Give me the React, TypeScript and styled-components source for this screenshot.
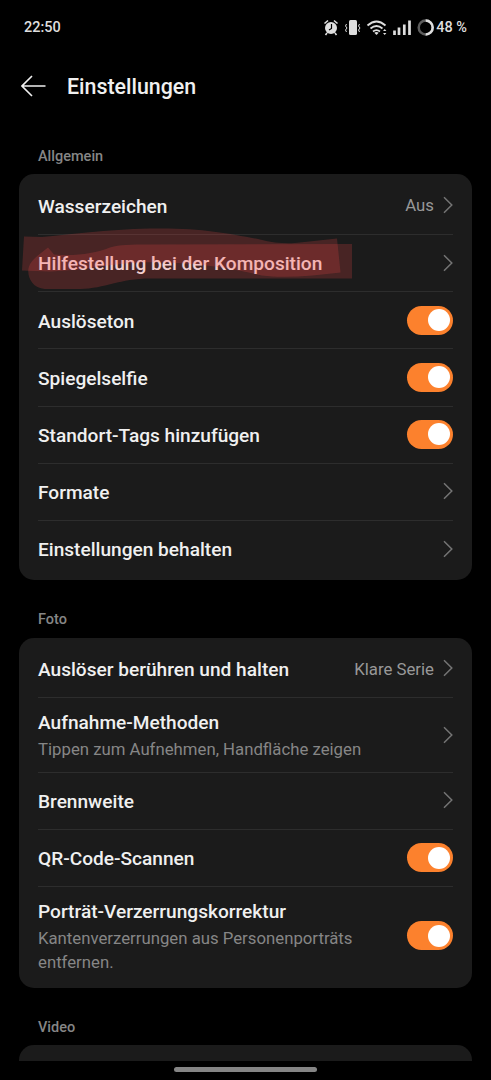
import styled, { createGlobalStyle } from "styled-components";

const GlobalStyle = createGlobalStyle`
	* {
		box-sizing: border-box;
	}

	body {
		margin: 0;
		background: #000;
		font-family: Roboto, "Liberation Sans", sans-serif;
	}
`;

const Screen = styled.div`
	width: 491px;
	height: 1080px;
	display: flex;
	flex-direction: column;
	overflow: hidden;
	background: #000;
	color: #f0f0f0;
`;

const StatusBar = styled.div`
	height: 54px;
	flex-shrink: 0;
	display: flex;
	align-items: center;
	justify-content: space-between;
	padding: 1px 24px 0;
	font-size: 14.5px;
	font-weight: 500;
	color: #dedede;
`;

const StatusIcons = styled.svg`
	width: 112px;
	height: 20px;
	margin: -1px 2px 0 0;
`;

const StatusGroup = styled.div`
	display: flex;
	align-items: center;
`;

const Header = styled.header`
	height: 64px;
	flex-shrink: 0;
	display: flex;
	align-items: center;
	gap: 21px;
	padding-left: 21px;
`;

const BackIcon = styled.svg`
	width: 25px;
	height: 22px;
`;

const PageTitle = styled.h1`
	margin: 0;
	font-size: 21.4px;
	font-weight: 500;
`;

const Content = styled.main`
	height: 943px;
	flex-shrink: 0;
	overflow: hidden;
	padding: 0 19px;
`;

const SectionTitle = styled.h2<{ $first?: boolean }>`
	height: ${({ $first }) => ($first ? 56.2 : 57.6)}px;
	margin: 0;
	padding: 0 19px 7.6px;
	display: flex;
	align-items: flex-end;
	font-size: 14.5px;
	line-height: 20px;
	font-weight: 500;
	color: #868686;
`;

const Card = styled.section`
	min-height: 60px;
	padding: 2.6px 19px 3px;
	border-radius: 15px;
	background: #1b1b1b;
`;

const Row = styled.div<{ $height: number }>`
	position: relative;
	height: ${({ $height }) => $height}px;
	display: flex;
	align-items: center;
	justify-content: space-between;

	& + & {
		border-top: 1px solid #2d2d2d;
	}
`;

const RowText = styled.div`
	display: flex;
	flex-direction: column;
	gap: 2px;
	padding-top: 2.6px;
`;

const RowTitle = styled.div`
	font-size: 19.1px;
	line-height: 24px;
	font-weight: 500;
	white-space: nowrap;
`;

const RowDetail = styled.div`
	max-width: 330px;
	font-size: 16.75px;
	line-height: 24.3px;
	color: #868686;
`;

const RowEnd = styled.div`
	display: flex;
	align-items: center;
	gap: 9px;
	font-size: 16.8px;
	color: #989898;
`;

const ChevronIcon = styled.svg`
	width: 10px;
	height: 18px;
	margin-top: -1px;
`;

const Switch = styled.div`
	width: 46px;
	height: 29px;
	margin-top: -0.5px;
	padding: 0 3.5px;
	display: flex;
	align-items: center;
	justify-content: flex-end;
	border-radius: 15px;
	background: #fc812d;
`;

const Knob = styled.div`
	width: 22px;
	height: 22px;
	border-radius: 50%;
	background: #fff;
`;

const Marker = styled.svg`
	position: absolute;
	left: -19px;
	top: -11px;
	width: 340px;
	height: 70px;
	pointer-events: none;
`;

const NavBar = styled.div`
	flex: 1;
	display: flex;
	justify-content: center;
	padding-top: 6px;
`;

const NavHandle = styled.div`
	width: 143px;
	height: 5px;
	border-radius: 3px;
	background: #858585;
`;

interface Setting {
	title: string;
	detail?: string;
	value?: string;
	toggle?: boolean;
	marked?: boolean;
	height?: number;
}

const general: Setting[] = [
	{ title: "Wasserzeichen", value: "Aus" },
	{ title: "Hilfestellung bei der Komposition", marked: true },
	{ title: "Auslöseton", toggle: true },
	{ title: "Spiegelselfie", toggle: true },
	{ title: "Standort-Tags hinzufügen", toggle: true },
	{ title: "Formate" },
	{ title: "Einstellungen behalten" },
];

const photo: Setting[] = [
	{ title: "Auslöser berühren und halten", value: "Klare Serie" },
	{
		title: "Aufnahme-Methoden",
		detail: "Tippen zum Aufnehmen, Handfläche zeigen",
		height: 74.3,
	},
	{ title: "Brennweite" },
	{ title: "QR-Code-Scannen", toggle: true },
	{
		title: "Porträt-Verzerrungskorrektur",
		detail: "Kantenverzerrungen aus Personenporträts entfernen.",
		toggle: true,
		height: 98.5,
	},
];

const Chevron = () => (
	<ChevronIcon viewBox="0 0 10 18" fill="none" stroke="#747474" strokeWidth="1.5">
		<path d="M1 1.2L8.8 9L1 16.8" />
	</ChevronIcon>
);

// two overlapping translucent strokes drawn over the row
const MarkerStrokes = () => (
	<Marker viewBox="19 223.5 340 70" fill="#ff4b4b" fillOpacity="0.2">
		<path d="M24 236L42 236.5C70 234 105 229 150 228C200 227 230 233 260 239C275 243 290 243.500 300 242L337 238L340.500 272C315 275 285 278 262 275C220 265 180 261 140 262C110 263 85 270 50 271L22 270Z" />
		<path d="M48 247L54 254C75 256 95 253 110 247C120 244 130 244 150 244L352 243.500V278H150C120 278 105 288 80 288.500H45C32 288 27 276 28.500 268C30 260 38 255 48 247Z" />
	</Marker>
);

const SettingsCard = ({ items }: { items: Setting[] }) => (
	<Card>
		{items.map(({ title, detail, value, toggle, marked, height = 57.2 }) => (
			<Row key={title} $height={height}>
				<RowText>
					<RowTitle>{title}</RowTitle>
					{detail && <RowDetail>{detail}</RowDetail>}
				</RowText>
				{toggle ? (
					<Switch>
						<Knob />
					</Switch>
				) : (
					<RowEnd>
						{value}
						<Chevron />
					</RowEnd>
				)}
				{marked && <MarkerStrokes />}
			</Row>
		))}
	</Card>
);

const StatusGlyphs = () => (
	<StatusIcons viewBox="322 17 112 20" fill="none" stroke="#dedede">
		<circle cx="331" cy="28" r="6" fill="#dedede" stroke="none" />
		<path d="M324.500 23.500L328 20.500M337.500 23.500L334 20.500M327 33L325.500 35M335 33L336.500 35" strokeWidth="1.6" />
		<path d="M331.500 24V28.500L329 30" stroke="#000" strokeWidth="1.2" />
		<rect x="349" y="20" width="8" height="15" rx="1.5" fill="#dedede" stroke="none" />
		<path d="M346.500 24L345.500 26L347 28L345.500 30L346.500 32M359.500 24L358.500 26L360 28L358.500 30L359.500 32" strokeWidth="1" />
		<path d="M367.500 25.500Q376.500 17.500 385.500 25.500M370.500 28.500Q376.500 23.500 382.500 28.500M373 31.500Q376.500 28.700 380 31.500" strokeWidth="1.8" />
		<path d="M374.300 32.800Q376.500 31.200 378.700 32.800L376.500 35Z" fill="#dedede" stroke="none" />
		<path d="M383 31L384.700 29L386.400 31ZM383 33L384.700 35L386.400 33Z" fill="#dedede" stroke="none" />
		<path d="M394.500 35V30.500M399 35V27.500M404.300 35V24.500M409.500 35V20.500" strokeWidth="2.7" />
		<circle cx="425.700" cy="27.500" r="7" stroke="#5c5c5c" strokeWidth="2.5" />
		<path d="M425.700 20.500A7 7 0 0 1 425.700 34.500" strokeWidth="2.5" />
	</StatusIcons>
);

const App = () => (
	<>
		<GlobalStyle />
		<Screen>
			<StatusBar>
				<span>22:50</span>
				<StatusGroup>
					<StatusGlyphs />
					<span>48 %</span>
				</StatusGroup>
			</StatusBar>
			<Header>
				<BackIcon viewBox="0 0 25 22" fill="none" stroke="#f0f0f0" strokeWidth="1.6">
					<path d="M24.500 11H1M11 1L1 11L11 21" />
				</BackIcon>
				<PageTitle>Einstellungen</PageTitle>
			</Header>
			<Content>
				<SectionTitle $first>Allgemein</SectionTitle>
				<SettingsCard items={general} />
				<SectionTitle>Foto</SectionTitle>
				<SettingsCard items={photo} />
				<SectionTitle>Video</SectionTitle>
				<SettingsCard items={[]} />
			</Content>
			<NavBar>
				<NavHandle />
			</NavBar>
		</Screen>
	</>
);

export default App;
